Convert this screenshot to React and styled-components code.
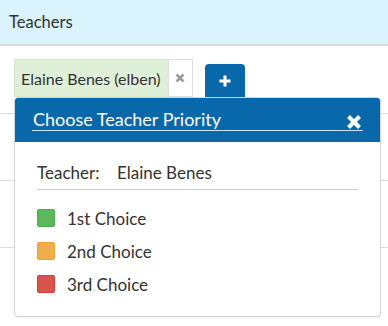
import React from "react";
import styled, { createGlobalStyle } from "styled-components";

const GlobalStyle = createGlobalStyle`
  html, body { margin: 0; padding: 0; background: #fff; }
  body { font-family: Lato, "Open Sans", sans-serif; color: #333; }
`;

const Page = styled.div`
  position: relative;
  width: 388px;
  height: 326px;
  overflow: hidden;
  background: #fff;
`;

const PanelHeading = styled.div`
  height: 44px;
  display: flex;
  align-items: center;
  padding-left: 9px;
  background: #daf3fc;
  border-bottom: 2px solid #dddddd;
  font-size: 16.5px;
  color: #333;
`;

const TagRow = styled.div`
  display: flex;
  align-items: flex-start;
  padding: 13px 14px 0;
  height: 51px;
  box-sizing: border-box;
`;

const Tag = styled.div`
  display: flex;
  align-items: center;
  height: 38px;
  padding: 0 7px 0 6px;
  background: #dff0d8;
  border: 1px solid #d6e9c6;
  border-right: none;
  font-size: 16px;
  box-sizing: border-box;
`;

const TagRemove = styled.div`
  width: 25px;
  height: 38px;
  display: flex;
  align-items: center;
  justify-content: center;
  border: 1px solid #dddddd;
  box-sizing: border-box;
  background: #fff;
`;

const AddButton = styled.div`
  width: 40px;
  height: 34px;
  margin: 5px 0 0 12px;
  background: #0968a9;
  border-radius: 4px 4px 0 0;
  display: flex;
  align-items: center;
  justify-content: center;
`;

const Table = styled.div`
  margin-top: 16px;
`;

const TableRow = styled.div`
  height: 66px;
  border-top: 1px solid #dddddd;
`;

const Popup = styled.div`
  position: absolute;
  top: 97px;
  left: 14px;
  width: 367px;
  height: 220px;
  box-sizing: border-box;
  background: #fff;
  border: 1px solid #d4d4d4;
  border-radius: 4px;
  overflow: hidden;
  box-shadow: 0 1px 2px rgba(0, 0, 0, 0.06);
`;

const PopupHeader = styled.div`
  height: 44px;
  background: #0968a9;
  padding: 0 17px;
  box-sizing: border-box;
  display: flex;
`;

const TitleBar = styled.div`
  flex: 1;
  height: 32px;
  display: flex;
  align-items: center;
  justify-content: space-between;
  border-bottom: 1px solid #d5e6f2;
`;

const Title = styled.span`
  color: #fff;
  font-size: 18px;
  padding-top: 10px;
  padding-left: 1px;
`;

const CloseIcon = styled.svg`
  width: 16px;
  height: 16px;
  margin: 16px 1px 0 0;
`;

const PopupBody = styled.div`
  padding: 0 22px;
`;

const TeacherRow = styled.div`
  display: flex;
  align-items: flex-end;
  height: 48px;
  border-bottom: 1px solid #cccccc;
  font-size: 17px;
  line-height: 20px;
  padding-bottom: 6px;
  box-sizing: border-box;
`;

const Label = styled.span`
  width: 80px;
`;

const ChoiceList = styled.div`
  display: flex;
  flex-direction: column;
  gap: 15px;
  padding-top: 19px;
`;

const Choice = styled.div`
  display: flex;
  align-items: center;
  height: 18px;
  font-size: 17px;
`;

const Swatch = styled.span`
  width: 18px;
  height: 18px;
  box-sizing: border-box;
  border-radius: 2px;
  background: ${(p) => p.$color};
  border: 1px solid ${(p) => p.$border};
  margin-right: 12px;
  flex: none;
`;

const choices = [
  { label: "1st Choice", color: "#5cb85c", border: "#4cae4c" },
  { label: "2nd Choice", color: "#f0ad4e", border: "#eea236" },
  { label: "3rd Choice", color: "#d9534f", border: "#d43f3a" },
];

export default function App() {
  return (
    <>
      <GlobalStyle />
      <Page>
        <PanelHeading>Teachers</PanelHeading>
        <TagRow>
          <Tag>Elaine Benes (elben)</Tag>
          <TagRemove>
            <svg width="10" height="10" viewBox="0 0 10 10">
              <path d="M1.5 1.5 L8.5 8.5 M8.5 1.5 L1.5 8.5" stroke="#9a9a9a" strokeWidth="2.6" />
            </svg>
          </TagRemove>
          <AddButton>
            <svg width="12" height="12" viewBox="0 0 12 12">
              <path d="M6 0.5 V11.5 M0.5 6 H11.5" stroke="#fff" strokeWidth="3" />
            </svg>
          </AddButton>
        </TagRow>
        <Table>
          <TableRow />
          <TableRow />
          <TableRow />
        </Table>
        <Popup>
          <PopupHeader>
            <TitleBar>
              <Title>Choose Teacher Priority</Title>
              <CloseIcon viewBox="0 0 16 16">
                <path d="M2.5 2.5 L13.5 13.5 M13.5 2.5 L2.5 13.5" stroke="#fff" strokeWidth="4" />
              </CloseIcon>
            </TitleBar>
          </PopupHeader>
          <PopupBody>
            <TeacherRow>
              <Label>Teacher:</Label>
              <span>Elaine Benes</span>
            </TeacherRow>
            <ChoiceList>
              {choices.map((c) => (
                <Choice key={c.label}>
                  <Swatch $color={c.color} $border={c.border} />
                  {c.label}
                </Choice>
              ))}
            </ChoiceList>
          </PopupBody>
        </Popup>
      </Page>
    </>
  );
}
